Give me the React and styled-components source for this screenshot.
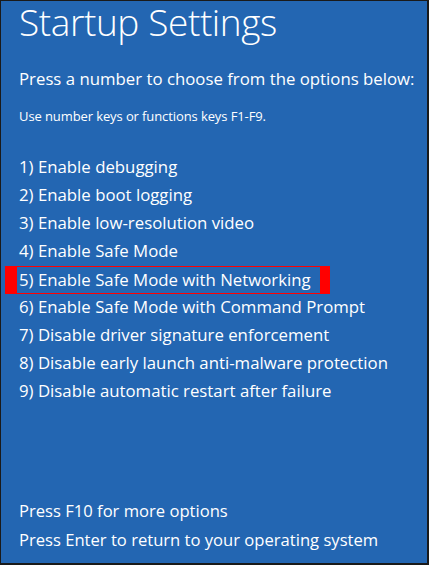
import React from "react";
import styled, { createGlobalStyle } from "styled-components";

const GlobalStyle = createGlobalStyle`
    html, body {
        margin: 0;
        padding: 0;
        background: #ffffff;
    }
`;

const options = [
    "1) Enable debugging",
    "2) Enable boot logging",
    "3) Enable low-resolution video",
    "4) Enable Safe Mode",
    "5) Enable Safe Mode with Networking",
    "6) Enable Safe Mode with Command Prompt",
    "7) Disable driver signature enforcement",
    "8) Disable early launch anti-malware protection",
    "9) Disable automatic restart after failure",
];

const App = () => {
    return (
        <>
            <GlobalStyle />
            <Screen>
                <Title>Startup Settings</Title>
                <Prompt>Press a number to choose from the options below:</Prompt>
                <Hint>Use number keys or functions keys F1-F9.</Hint>
                <OptionList>
                    {options.map((text, i) => (
                        <Option key={text} $marked={i === 4}>{text}</Option>
                    ))}
                </OptionList>
                <Footer>
                    <FooterLine>Press F10 for more options</FooterLine>
                    <FooterLine>Press Enter to return to your operating system</FooterLine>
                </Footer>
            </Screen>
        </>
    );
}

const Screen = styled.div`
    box-sizing: border-box;
    width: 429px;
    height: 565px;
    display: flex;
    flex-direction: column;
    padding: 0 0 0 18px;
    background: #2366b2;
    border: 1px solid #1a1a1a;
    border-right-width: 2px;
    border-bottom-width: 2px;
    color: #ffffff;
    font-family: "Open Sans", "Liberation Sans", sans-serif;
`;

const Title = styled.h1`
    margin: -2px 0 0;
    font-size: 37px;
    font-weight: 300;
    line-height: 46px;
    letter-spacing: -0.4px;
`;

const Prompt = styled.p`
    margin: 22px 0 0;
    font-size: 16.8px;
    line-height: 24px;
`;

const Hint = styled.p`
    margin: 16px 0 0;
    font-size: 13px;
    line-height: 18px;
    letter-spacing: -0.1px;
`;

const OptionList = styled.div`
    display: flex;
    flex-direction: column;
    margin-top: 29px;
`;

const Option = styled.div`
    box-sizing: border-box;
    height: 28px;
    font-size: 16.8px;
    line-height: 26px;
    white-space: nowrap;
    ${({ $marked }) => $marked && `
        width: fit-content;
        margin-left: -14px;
        padding: 0 9px 0 2px;
        border: 1px solid #ff0000;
        border-left-width: 12px;
        border-right-width: 10px;
    `}
`;

const Footer = styled.div`
    display: flex;
    flex-direction: column;
    margin-top: auto;
    margin-bottom: 9px;
`;

const FooterLine = styled.div`
    font-size: 16.6px;
    line-height: 29px;
    white-space: nowrap;
`;

export default App;
